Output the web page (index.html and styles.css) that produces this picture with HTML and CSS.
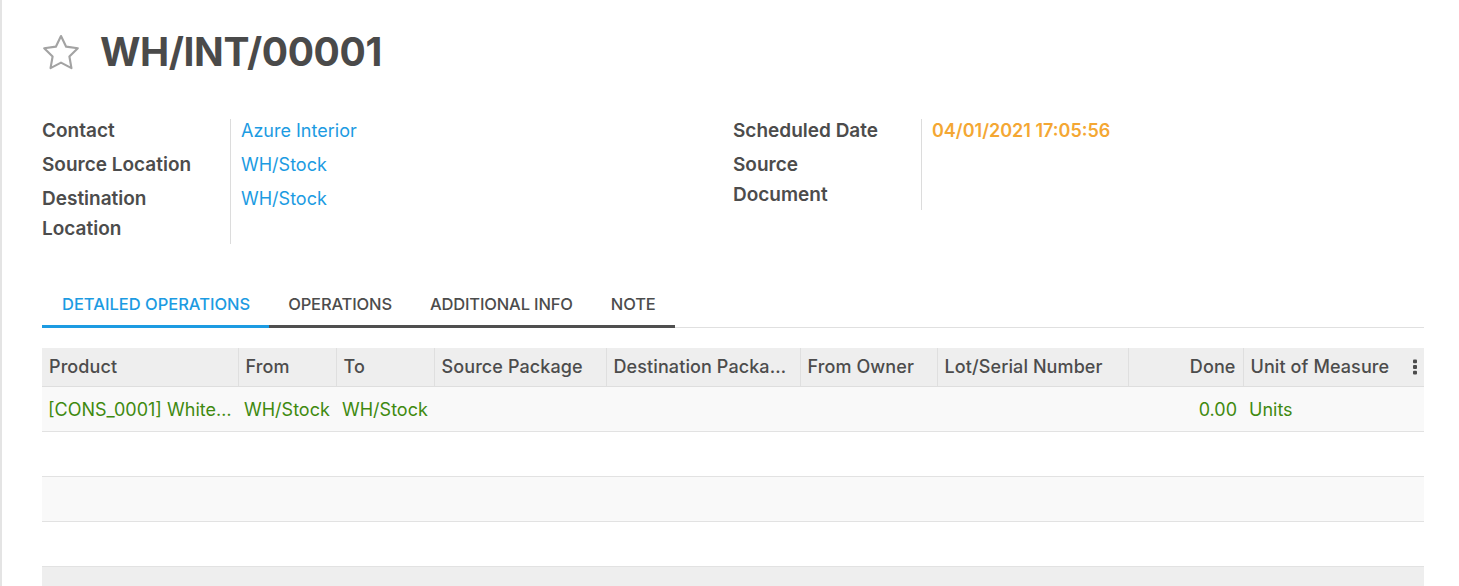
FILE: index.html
```html
<!DOCTYPE html>
<html lang="en">
<head>
<meta charset="utf-8">
<title>WH/INT/00001</title>
<link rel="stylesheet" href="styles.css">
</head>
<body>
<div class="sheet">
  <div class="title-row">
    <svg class="star" viewBox="1 1 22 21" width="38" height="36" aria-hidden="true">
      <polygon points="12,2.2 15,8.4 21.8,9.3 16.9,14.1 18.1,20.9 12,17.7 5.9,20.9 7.1,14.1 2.2,9.3 9,8.4" fill="none" stroke="#a3a3a3" stroke-width="1.25" stroke-linejoin="round"/>
    </svg>
    <h1 class="title">WH/INT/00001</h1>
  </div>

  <div class="groups">
    <div class="group">
      <div class="divider span-3"></div>
      <div class="label">Contact</div>
      <div class="value link">Azure Interior</div>
      <div class="label">Source Location</div>
      <div class="value link">WH/Stock</div>
      <div class="label">Destination Location</div>
      <div class="value link">WH/Stock</div>
    </div>
    <div class="group">
      <div class="divider span-2"></div>
      <div class="label">Scheduled Date</div>
      <div class="value date">04/01/2021 17:05:56</div>
      <div class="label">Source Document</div>
      <div class="value"></div>
    </div>
  </div>

  <ul class="tabs">
    <li class="tab active">Detailed Operations</li>
    <li class="tab">Operations</li>
    <li class="tab">Additional Info</li>
    <li class="tab">Note</li>
  </ul>

  <table class="lines">
    <colgroup>
      <col class="c-product"><col class="c-from"><col class="c-to"><col class="c-spack"><col class="c-dpack"><col class="c-owner"><col class="c-lot"><col class="c-done"><col class="c-uom"><col class="c-opt">
    </colgroup>
    <thead>
      <tr>
        <th>Product</th>
        <th>From</th>
        <th>To</th>
        <th>Source Package</th>
        <th class="tight">Destination Package</th>
        <th>From Owner</th>
        <th>Lot/Serial Number</th>
        <th class="num">Done</th>
        <th>Unit of Measure</th>
        <th class="opt">
          <svg viewBox="0 0 4 16" width="4" height="16" aria-hidden="true">
            <rect x="0" y="0.5" width="4" height="3.8" rx="1"/>
            <rect x="0" y="6.1" width="4" height="3.8" rx="1"/>
            <rect x="0" y="11.7" width="4" height="3.8" rx="1"/>
          </svg>
        </th>
      </tr>
    </thead>
    <tbody>
      <tr class="data">
        <td>[CONS_0001] White Board</td>
        <td>WH/Stock</td>
        <td>WH/Stock</td>
        <td></td>
        <td></td>
        <td></td>
        <td></td>
        <td class="num">0.00</td>
        <td>Units</td>
        <td></td>
      </tr>
      <tr><td colspan="10"></td></tr>
      <tr><td colspan="10"></td></tr>
      <tr><td colspan="10"></td></tr>
    </tbody>
    <tfoot>
      <tr><td colspan="10"></td></tr>
    </tfoot>
  </table>
</div>
</body>
</html>
```

FILE: styles.css
```css
* { box-sizing: border-box; }

html, body {
  margin: 0;
  padding: 0;
  background: #ffffff;
}

body {
  font-family: Inter, "Noto Sans", "Liberation Sans", sans-serif;
  color: #4c4c4c;
  height: 586px;
  overflow: hidden;
}

.sheet {
  border-left: 2px solid #e4e4e4;
  margin-left: 0;
  padding: 28px 35px 0 40px;
  min-height: 586px;
}

/* title */
.title-row {
  display: flex;
  align-items: center;
  gap: 20px;
  height: 47px;
}

.star {
  display: block;
  flex: none;
  margin-top: 1px;
}

.title {
  margin: 0;
  font-size: 39px;
  line-height: 47px;
  font-weight: 700;
  color: #4a4a4a;
  letter-spacing: -0.4px;
}

/* field groups */
.groups {
  display: grid;
  grid-template-columns: 1fr 1fr;
  align-items: start;
  margin-top: 41px;
}

.group {
  display: grid;
  grid-template-columns: 188px 1px 1fr;
  row-gap: 4px;
  align-items: start;
  align-content: start;
}

.divider {
  grid-column: 2;
  align-self: stretch;
  margin-top: 3px;
  background: #dcdcdc;
}

.divider.span-3 { grid-row: 1 / span 3; }
.divider.span-2 { grid-row: 1 / span 2; }

.label {
  grid-column: 1;
  font-size: 19px;
  line-height: 30px;
  font-weight: 600;
  color: #4c4c4c;
  padding-right: 26px;
}

.value {
  grid-column: 3;
  font-size: 18px;
  line-height: 30px;
  padding-left: 10px;
  min-height: 30px;
}

.link { color: #1c9be2; }

.date {
  color: #f4a733;
  font-weight: 600;
}

/* tabs */
.tabs {
  list-style: none;
  margin: 40px 0 0 0;
  padding: 0;
  display: flex;
  border-bottom: 1px solid #e0e0e0;
}

.tab {
  padding: 8px 19px 8px 19px;
  font-size: 16.5px;
  line-height: 25px;
  font-weight: 500;
  text-transform: uppercase;
  color: #4c4c4c;
  border-bottom: 3px solid #4f4f4f;
  margin-bottom: -1px;
  letter-spacing: -0.15px;
}

.tab.active {
  color: #1c9be2;
  border-bottom-color: #1c9be2;
  padding-left: 20px;
  letter-spacing: 0;
}

/* table */
.lines {
  width: 100%;
  margin-top: 20px;
  border-collapse: collapse;
  table-layout: fixed;
  font-size: 18px;
}

.c-product { width: 196px; }
.c-from { width: 98px; }
.c-to { width: 98px; }
.c-spack { width: 172px; }
.c-dpack { width: 194px; }
.c-owner { width: 137px; }
.c-lot { width: 191px; }
.c-done { width: 115px; }
.c-uom { width: 157px; }
.c-opt { width: 24px; }

.lines th {
  background: #eeeeee;
  height: 38px;
  padding: 0 7px;
  text-align: left;
  font-weight: 500;
  color: #4c4c4c;
  white-space: nowrap;
  overflow: hidden;
  text-overflow: ellipsis;
  letter-spacing: 0.1px;
  border-left: 1px solid #dfdfdf;
  border-bottom: 1px solid #dedede;
}

.lines th.tight { padding-right: 9px; }

.lines th:first-child { border-left: none; }

.lines th.opt {
  border-left: none;
  padding: 0;
  text-align: center;
  text-overflow: clip;
}

.lines th.opt svg {
  display: block;
  margin: 0 auto;
  fill: #4c4c4c;
  position: relative;
  left: 3px;
}

.lines th.num,
.lines td.num { text-align: right; }

.lines td {
  height: 45px;
  padding: 1px 6px 0 6px;
  border-bottom: 1px solid #e2e2e2;
  white-space: nowrap;
  overflow: hidden;
  text-overflow: ellipsis;
  color: #3f8a10;
}

.lines tbody tr:nth-child(odd) td { background: #f9f9f9; }
.lines tbody tr:nth-child(even) td { background: #ffffff; }

.lines tfoot td {
  background: #eeeeee;
  height: 24px;
  border-bottom: none;
}
```
